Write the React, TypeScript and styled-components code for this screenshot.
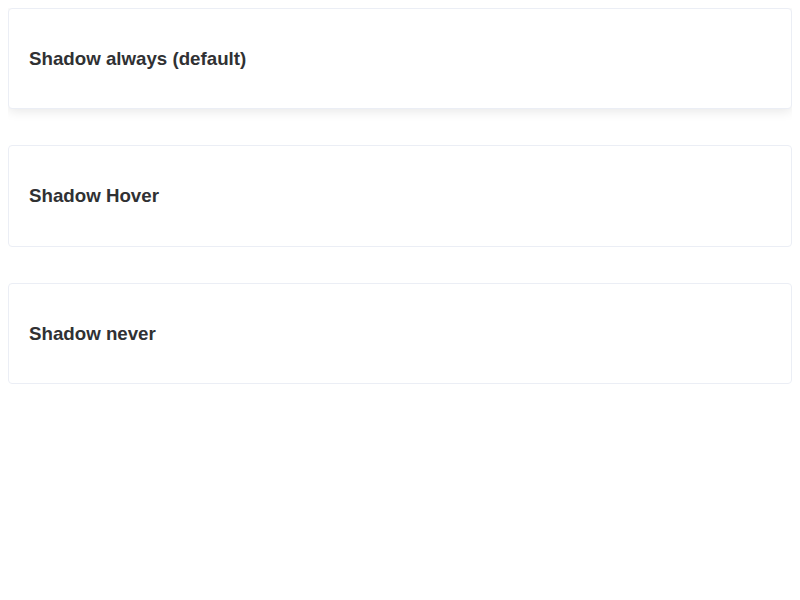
import styled, { createGlobalStyle } from "styled-components";

const GlobalStyle = createGlobalStyle`
  body {
    margin: 8px;
    background: #ffffff;
    font-family: "Liberation Sans", Arial, sans-serif;
  }
`;

const List = styled.div`
  display: flex;
  flex-direction: column;
  gap: 36px;
`;

const Card = styled.div<{ $shadow: "always" | "hover" | "never" }>`
  border: 1px solid #ebeef5;
  border-radius: 4px;
  background: #ffffff;
  color: #303133;
  overflow: hidden;
  box-shadow: ${(p) =>
    p.$shadow === "always" ? "0 2px 12px 0 rgba(0, 0, 0, 0.1)" : "none"};
  transition: box-shadow 0.3s;

  &:hover {
    box-shadow: ${(p) =>
      p.$shadow === "never" ? "none" : "0 2px 12px 0 rgba(0, 0, 0, 0.1)"};
  }
`;

const CardBody = styled.div`
  padding: 20px;
`;

const Title = styled.h3`
  margin: 18.72px 0;
  font-size: 18.72px;
  font-weight: 700;
  line-height: 22px;
  color: #303133;
`;

const cards: { shadow: "always" | "hover" | "never"; title: string }[] = [
  { shadow: "always", title: "Shadow always (default)" },
  { shadow: "hover", title: "Shadow Hover" },
  { shadow: "never", title: "Shadow never" },
];

export default function App() {
  return (
    <>
      <GlobalStyle />
      <List>
        {cards.map((c) => (
          <Card key={c.title} $shadow={c.shadow}>
            <CardBody>
              <Title>{c.title}</Title>
            </CardBody>
          </Card>
        ))}
      </List>
    </>
  );
}
